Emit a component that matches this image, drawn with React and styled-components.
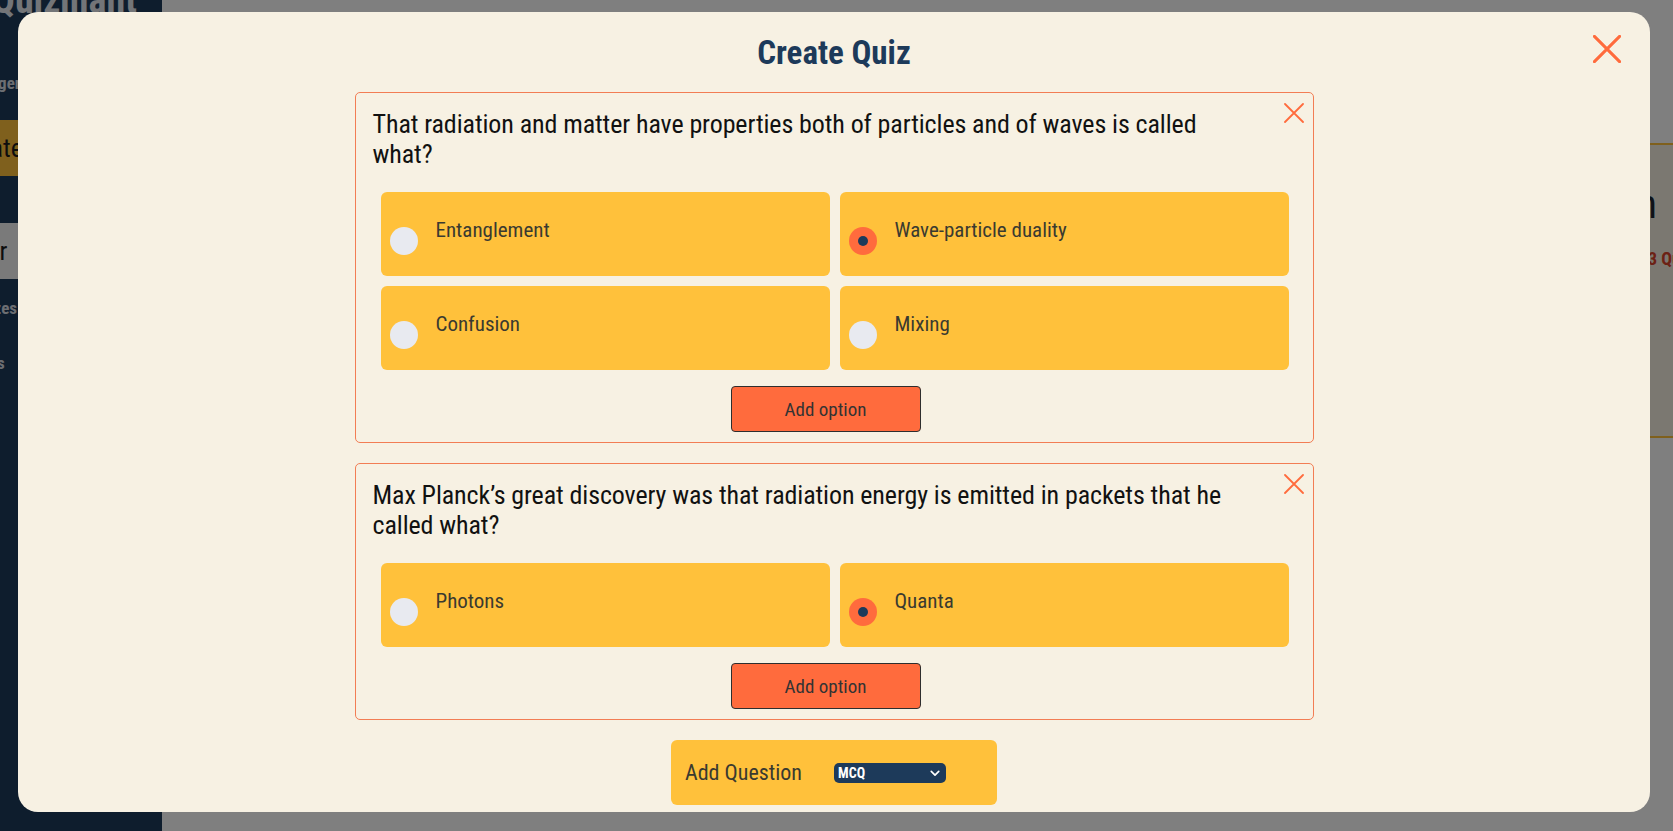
import React from "react";
import styled, { createGlobalStyle } from "styled-components";

const GlobalStyle = createGlobalStyle`
  * { box-sizing: border-box; }
  html, body { margin: 0; padding: 0; height: 100%; overflow: hidden; }
  body {
    font-family: "Roboto Condensed", "Liberation Sans Narrow", "DejaVu Sans Condensed", Roboto, sans-serif;
    font-stretch: condensed;
    background: #ffffff;
  }
`;

const questions = [
  {
    text: "That radiation and matter have properties both of particles and of waves is called what?",
    options: ["Entanglement", "Wave-particle duality", "Confusion", "Mixing"],
    answer: 1,
  },
  {
    text: "Max Planck\u2019s great discovery was that radiation energy is emitted in packets that he called what?",
    options: ["Photons", "Quanta"],
    answer: 1,
  },
];

function CrossIcon({ size, weight }) {
  return (
    <svg width={size} height={size} viewBox="0 0 20 20" fill="none">
      <path d="M1 1L19 19M19 1L1 19" stroke="#ff6b3d" strokeWidth={weight} strokeLinecap="round" />
    </svg>
  );
}

export default function App() {
  return (
    <>
      <GlobalStyle />
      <Page>
        <Sidebar>
          <Logo>Quizmant</Logo>
          <Greeting>Hi, Manager</Greeting>
          <NavItem $variant="active" $indent={-44} $gap={27}>Create</NavItem>
          <NavItem $variant="muted" $indent={-46} $gap={47}>Tutor</NavItem>
          <NavLink $indent={-37} $gap={19}>Quizzes</NavLink>
          <NavLink $indent={-46} $gap={35}>Results</NavLink>
        </Sidebar>
        <Main>
          <QuizCard>
            <QuizInfo>
              <QuizTitle>Physics Revision</QuizTitle>
              <QuizMeta>3 Questions</QuizMeta>
            </QuizInfo>
          </QuizCard>
        </Main>
      </Page>

      <Overlay />
      <Modal>
        <ModalClose aria-label="Close">
          <CrossIcon size={28} weight={2.2} />
        </ModalClose>
        <Title>Create Quiz</Title>

        {questions.map((q, qi) => (
          <QuestionCard key={qi}>
            <CardClose aria-label="Remove question">
              <CrossIcon size={20} weight={1.8} />
            </CardClose>
            <QuestionText>{q.text}</QuestionText>
            <OptionGrid>
              {q.options.map((opt, oi) => (
                <Option key={oi}>
                  <Radio $checked={oi === q.answer} />
                  <OptionLabel>{opt}</OptionLabel>
                </Option>
              ))}
            </OptionGrid>
            <AddOptionButton>Add option</AddOptionButton>
          </QuestionCard>
        ))}

        <AddQuestionBar>
          <AddQuestionLabel>Add Question</AddQuestionLabel>
          <SelectWrap>
            <TypeSelect defaultValue="MCQ">
              <option value="MCQ">MCQ</option>
              <option value="TF">True / False</option>
            </TypeSelect>
            <Chevron viewBox="0 0 12 8" fill="none">
              <path d="M1.5 1.5L6 6L10.5 1.5" stroke="#ffffff" strokeWidth="2" strokeLinecap="round" strokeLinejoin="round" />
            </Chevron>
          </SelectWrap>
        </AddQuestionBar>
      </Modal>
    </>
  );
}

const Page = styled.div`
  display: flex;
  height: 100vh;
  width: 100vw;
`;

const Sidebar = styled.aside`
  width: 162px;
  flex-shrink: 0;
  background: #1d3a5a;
  display: flex;
  flex-direction: column;
  overflow: hidden;
  white-space: nowrap;
`;

const Logo = styled.div`
  font-size: 38px;
  line-height: 44px;
  font-weight: 700;
  color: #e6ebf1;
  margin: -22px 0 0 -8px;
`;

const Greeting = styled.div`
  font-size: 17px;
  line-height: 20px;
  font-weight: 700;
  color: #d8dde4;
  margin-top: 51px;
  text-indent: -62px;
`;

const NavItem = styled.div`
  height: 56px;
  flex-shrink: 0;
  margin-top: ${({ $gap }) => $gap}px;
  background: ${({ $variant }) => ($variant === "active" ? "#ffc13b" : "#f5f5f5")};
  color: #1b1b1b;
  font-size: 26px;
  display: flex;
  align-items: center;
  text-indent: ${({ $indent }) => $indent}px;
`;

const NavLink = styled.div`
  font-size: 17px;
  line-height: 20px;
  font-weight: 700;
  color: #d8dde4;
  margin-top: ${({ $gap }) => $gap}px;
  text-indent: ${({ $indent }) => $indent}px;
`;

const Main = styled.main`
  flex: 1;
  background: #ffffff;
  padding: 143px 0 0 24px;
  overflow: hidden;
`;

const QuizCard = styled.section`
  width: 1560px;
  height: 295px;
  background: #f7f1e3;
  border: 2px solid #ffc13b;
  border-radius: 6px;
  display: flex;
  padding: 36px 0 0 1290px;
`;

const QuizInfo = styled.div`
  width: 179px;
  display: flex;
  flex-direction: column;
  gap: 19px;
  white-space: nowrap;
`;

const QuizTitle = styled.h2`
  margin: 0;
  align-self: flex-end;
  font-size: 40px;
  line-height: 48px;
  font-weight: 400;
  color: #1b2430;
`;

const QuizMeta = styled.div`
  margin-left: 170px;
  font-size: 18px;
  line-height: 22px;
  font-weight: 700;
  color: #d9432b;
`;

const Overlay = styled.div`
  position: fixed;
  inset: 0;
  background: rgba(0, 0, 0, 0.5);
`;

const Modal = styled.div`
  position: fixed;
  left: 18px;
  top: 12px;
  width: 1632px;
  height: 800px;
  border-radius: 20px;
  background: #f7f1e3;
  display: flex;
  flex-direction: column;
  align-items: center;
  gap: 20px;
  padding: 21px 0 8px;
  overflow: hidden;
`;

const ModalClose = styled.button`
  position: absolute;
  top: 23px;
  right: 29px;
  width: 28px;
  height: 28px;
  padding: 0;
  border: none;
  background: none;
  display: flex;
  cursor: pointer;
`;

const Title = styled.h1`
  margin: 0 0 -1px;
  font-size: 33px;
  line-height: 40px;
  font-weight: 700;
  color: #1d3a5a;
`;

const QuestionCard = styled.div`
  position: relative;
  width: 959px;
  border: 1px solid #f27d54;
  border-radius: 5px;
  padding: 16px 24px 10px 17px;
  display: flex;
  flex-direction: column;
`;

const CardClose = styled.button`
  position: absolute;
  top: 10px;
  right: 9px;
  width: 20px;
  height: 20px;
  padding: 0;
  border: none;
  background: none;
  display: flex;
  cursor: pointer;
`;

const QuestionText = styled.p`
  margin: 0 0 23px;
  max-width: 870px;
  font-size: 26px;
  line-height: 30px;
  letter-spacing: -0.1px;
  color: #111111;
`;

const OptionGrid = styled.div`
  display: grid;
  grid-template-columns: 1fr 1fr;
  gap: 10px;
  margin-left: 8px;
`;

const Option = styled.label`
  height: 84px;
  background: #ffc13b;
  border-radius: 6px;
  display: flex;
  align-items: flex-start;
  padding: 0 9px;
  cursor: pointer;
`;

const Radio = styled.span`
  width: 28px;
  height: 28px;
  margin-top: 35px;
  flex-shrink: 0;
  border-radius: 50%;
  background: ${({ $checked }) => ($checked ? "#ff6b3d" : "#e8eaf0")};
  display: flex;
  align-items: center;
  justify-content: center;

  &::after {
    content: "";
    display: ${({ $checked }) => ($checked ? "block" : "none")};
    width: 10px;
    height: 10px;
    border-radius: 50%;
    background: #1d3a5a;
  }
`;

const OptionLabel = styled.span`
  margin: 26px 0 0 18px;
  font-size: 21px;
  line-height: 24px;
  color: #3a3a30;
`;

const AddOptionButton = styled.button`
  align-self: center;
  width: 190px;
  height: 46px;
  margin: 16px 10px 0 0;
  background: #ff6b3d;
  border: 1px solid #2e2e2e;
  border-radius: 4px;
  font-family: inherit;
  font-stretch: inherit;
  font-size: 19px;
  color: #333333;
  cursor: pointer;
`;

const AddQuestionBar = styled.div`
  width: 326px;
  height: 65px;
  flex-shrink: 0;
  background: #ffc13b;
  border-radius: 6px;
  display: flex;
  align-items: center;
  padding-left: 14px;
  gap: 32px;
`;

const AddQuestionLabel = styled.span`
  font-size: 22px;
  color: #3a3a30;
`;

const SelectWrap = styled.div`
  position: relative;
  display: flex;
`;

const TypeSelect = styled.select`
  appearance: none;
  width: 112px;
  height: 20px;
  padding: 0 0 0 4px;
  border: none;
  border-radius: 5px;
  background: #1d3a5a;
  color: #ffffff;
  font-family: inherit;
  font-stretch: inherit;
  font-size: 14px;
  font-weight: 700;
  outline: none;
`;

const Chevron = styled.svg`
  position: absolute;
  right: 6px;
  top: 7px;
  width: 10px;
  height: 7px;
  pointer-events: none;
`;
